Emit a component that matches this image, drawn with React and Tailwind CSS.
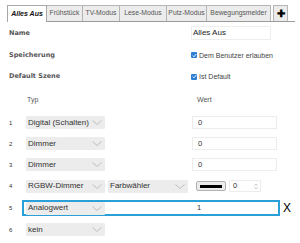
import React from "react";

const Chevron = ({ className = "" }) => (
  <svg width="10" height="5" viewBox="0 0 10 5" className={className}>
    <path d="M0.5 0.5 L5 4.5 L9.5 0.5" fill="none" stroke="#b9b9b9" strokeWidth="0.9" />
  </svg>
);

const Select = ({ label, w = "w-[79px]" }) => (
  <div className={`${w} h-[13px] bg-[#ececec] rounded-[1px] flex items-center justify-between pl-[2px] pr-[3px]`}>
    <span className="text-[8px] text-[#333] leading-none whitespace-nowrap">{label}</span>
    <Chevron />
  </div>
);

const Check = () => (
  <div className="w-[6px] h-[6px] bg-[#2f7fd6] rounded-[1px] flex items-center justify-center mr-[2px]">
    <svg width="5" height="5" viewBox="0 0 5 5">
      <path d="M0.8 2.6 L2 3.8 L4.2 1" fill="none" stroke="white" strokeWidth="0.9" />
    </svg>
  </div>
);

const Input = ({ value }) => (
  <div className="w-[85px] h-[13px] bg-white border border-[#ececec] flex items-center pl-[5px]">
    <span className="text-[7.5px] text-[#333] leading-none">{value}</span>
  </div>
);

const tabs = ["Frühstück", "TV-Modus", "Lese-Modus", "Putz-Modus", "Bewegungsmelder"];
const tabW = ["w-[36px]", "w-[37px]", "w-[47px]", "w-[40px]", "w-[64px]"];

export default function App() {
  return (
    <div className="w-[300px] h-[243px] bg-white overflow-hidden" style={{ fontFamily: '"Liberation Sans", Arial, sans-serif' }}>
      {/* Tabs */}
      <div className="pt-[5px] pl-[7px] pr-[5px]">
        <div className="flex items-end border-b border-[#9a9a9a] h-[17px]">
          <div className="w-[40px] h-[17px] bg-white border border-[#a8a8a8] border-b-0 flex items-center justify-center -mb-px pb-px">
            <span className="text-[7px] font-bold italic text-[#111] leading-none">Alles Aus</span>
          </div>
          {tabs.map((t, i) => (
            <div key={t} className={`${tabW[i]} h-[16px] bg-[#ececec] border border-[#b5b5b5] border-b-0 border-l-0 flex items-center justify-center`}>
              <span className="text-[6.8px] text-[#555] leading-none whitespace-nowrap">{t}</span>
            </div>
          ))}
          <div className="w-[15px] h-[16px] bg-[#ececec] border border-[#b5b5b5] border-b-0 ml-[2px] flex items-center justify-center">
            <span className="text-[10px] font-bold text-black leading-none">✚</span>
          </div>
        </div>
      </div>

      {/* Settings */}
      <div className="pl-[9px]">
        <div className="flex items-center h-[22px]">
          <span className="w-[182px] text-[6.5px] font-bold text-[#555] leading-none" style={{ fontFamily: '"DejaVu Sans", sans-serif' }}>Name</span>
          <div className="w-[80px] h-[14px] border border-[#eeeeee] flex items-center pl-[1px]">
            <span className="text-[8px] text-[#222] leading-none">Alles Aus</span>
          </div>
        </div>
        <div className="flex items-center h-[22px]">
          <span className="w-[182px] text-[6.5px] font-bold text-[#555] leading-none" style={{ fontFamily: '"DejaVu Sans", sans-serif' }}>Speicherung</span>
          <Check />
          <span className="text-[7px] text-[#444] leading-none">Dem Benutzer erlauben</span>
        </div>
        <div className="flex items-center h-[21px]">
          <span className="w-[182px] text-[6.5px] font-bold text-[#555] leading-none" style={{ fontFamily: '"DejaVu Sans", sans-serif' }}>Default Szene</span>
          <Check />
          <span className="text-[7px] text-[#444] leading-none">Ist Default</span>
        </div>
        <div className="flex items-center h-[25px]">
          <span className="w-[188px] pl-[18px] text-[7px] text-[#555] leading-none">Typ</span>
          <span className="text-[7px] text-[#555] leading-none">Wert</span>
        </div>
      </div>

      {/* Rows */}
      <div className="pl-[9px]">
        {[
          ["1", "Digital (Schalten)", "0"],
          ["2", "Dimmer", "0"],
          ["3", "Dimmer", "0"],
        ].map(([n, l, v]) => (
          <div key={n} className="flex items-center h-[21px]">
            <span className="w-[17px] text-[6px] text-[#333] leading-none">{n}</span>
            <Select label={l} />
            <div className="w-[87px]" />
            <Input value={v} />
          </div>
        ))}
        <div className="flex items-center h-[22px]">
          <span className="w-[17px] text-[6px] text-[#333] leading-none">4</span>
          <Select label="RGBW-Dimmer" />
          <div className="w-[3px]" />
          <Select label="Farbwähler" w="w-[80px]" />
          <div className="w-[8px]" />
          <div className="w-[30px] h-[10px] bg-[#ececec] border border-[#b0b0b0] rounded-[2px] flex items-center justify-center">
            <div className="w-[22px] h-[3px] bg-black" />
          </div>
          <div className="w-[3px]" />
          <div className="w-[32px] h-[12px] border border-[#ececec] flex items-center justify-between pl-[3px] pr-[2px]">
            <span className="text-[7.5px] text-[#333] leading-none">0</span>
            <svg width="4" height="7" viewBox="0 0 4 7">
              <path d="M0.5 2.8 L2 1 L3.5 2.8 M0.5 4.2 L2 6 L3.5 4.2" fill="none" stroke="#b0b0b0" strokeWidth="0.7" />
            </svg>
          </div>
        </div>
        <div className="flex items-center h-[22px]">
          <span className="w-[13px] text-[6px] text-[#333] leading-none">5</span>
          <div className="w-[258px] h-[16px] border-2 border-[#2a9fd8] flex items-center pl-[2px]">
            <Select label="Analogwert" />
            <div className="w-[87px]" />
            <div className="w-[85px] h-[12px] bg-white flex items-center pl-[5px]">
              <span className="text-[7.5px] text-[#333] leading-none">1</span>
            </div>
          </div>
          <span className="ml-[3px] text-[12px] text-black leading-none">X</span>
        </div>
        <div className="flex items-center h-[21px]">
          <span className="w-[17px] text-[6px] text-[#333] leading-none">6</span>
          <Select label="kein" />
        </div>
      </div>
    </div>
  );
}
